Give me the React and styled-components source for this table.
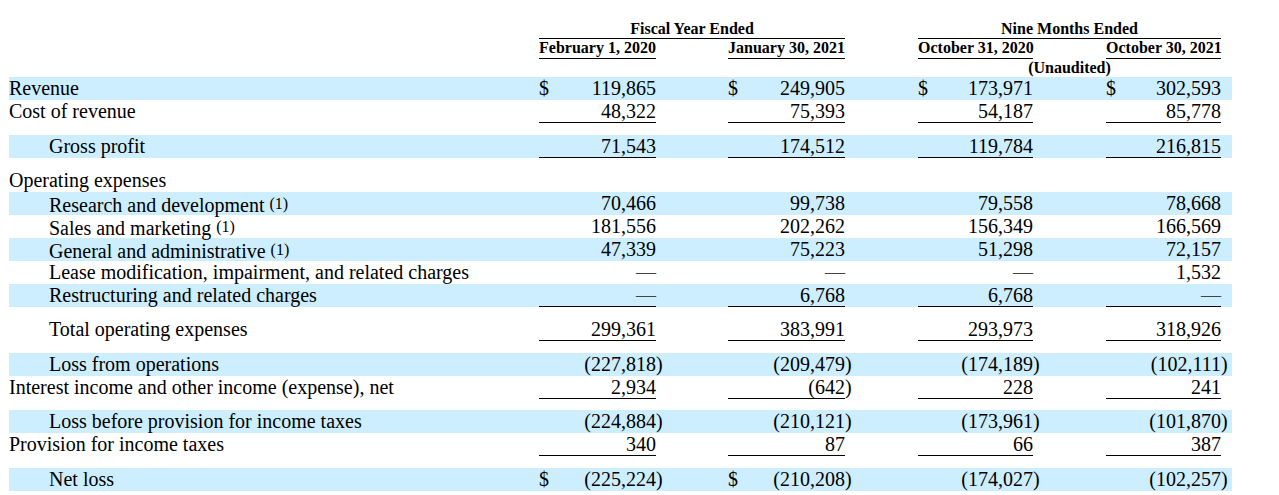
import React from "react";
import styled, { createGlobalStyle } from "styled-components";

const COLS = "530px 117px 72px 117px 73px 115px 73px 115px 11px";

const Global = createGlobalStyle`
  html, body { margin: 0; padding: 0; background: #fff; }
  body { font-family: "Liberation Serif", "Times New Roman", serif; color: #000; }
`;

const Page = styled.div`
  padding: 19px 0 0 9px;
  width: 1223px;
`;

const HeadRow = styled.div`
  display: grid;
  grid-template-columns: ${COLS};
  height: ${(p) => p.$h}px;
  font-size: 16px;
  font-weight: 700;
  line-height: ${(p) => p.$h + 1}px;
`;

const HeadCell = styled.div`
  grid-column: ${(p) => p.$col};
  height: 100%;
  text-align: center;
  white-space: nowrap;
  box-sizing: border-box;
  border-bottom: ${(p) => (p.$rule ? "1px solid #000" : "none")};
`;

const Row = styled.div`
  display: grid;
  grid-template-columns: ${COLS};
  height: 23px;
  font-size: 20px;
  line-height: 23px;
  background: ${(p) => (p.$shaded ? "#cceeff" : "transparent")};
`;

const Spacer = styled.div`
  height: ${(p) => p.$h}px;
`;

const Label = styled.div`
  padding-left: ${(p) => (p.$indent ? 40 : 0)}px;
  white-space: nowrap;
`;

const Note = styled.span`
  font-size: 16px;
  vertical-align: 3px;
  margin-left: 5px;
`;

const ValueCell = styled.div`
  display: flex;
  justify-content: space-between;
  height: 23px;
  box-sizing: border-box;
  white-space: nowrap;
  border-bottom: ${(p) => (p.$rule ? "1px solid #000" : "none")};
`;

const Dash = styled.span`
  color: #444;
`;

const Paren = styled.div`
  white-space: nowrap;
`;

const rows = [
  { label: "Revenue", shaded: true, dollars: [1, 1, 1, 1], v: ["119,865", "249,905", "173,971", "302,593"] },
  { label: "Cost of revenue", rule: true, v: ["48,322", "75,393", "54,187", "85,778"] },
  { spacer: 12 },
  { label: "Gross profit", shaded: true, indent: true, rule: true, v: ["71,543", "174,512", "119,784", "216,815"] },
  { spacer: 11 },
  { label: "Operating expenses", v: null },
  { label: "Research and development", note: true, shaded: true, indent: true, v: ["70,466", "99,738", "79,558", "78,668"] },
  { label: "Sales and marketing", note: true, indent: true, v: ["181,556", "202,262", "156,349", "166,569"] },
  { label: "General and administrative", note: true, shaded: true, indent: true, v: ["47,339", "75,223", "51,298", "72,157"] },
  { label: "Lease modification, impairment, and related charges", indent: true, v: ["—", "—", "—", "1,532"] },
  { label: "Restructuring and related charges", shaded: true, indent: true, rule: true, v: ["—", "6,768", "6,768", "—"] },
  { spacer: 11 },
  { label: "Total operating expenses", indent: true, rule: true, v: ["299,361", "383,991", "293,973", "318,926"] },
  { spacer: 12 },
  { label: "Loss from operations", shaded: true, indent: true, v: ["(227,818)", "(209,479)", "(174,189)", "(102,111)"] },
  { label: "Interest income and other income (expense), net", rule: true, v: ["2,934", "(642)", "228", "241"] },
  { spacer: 11 },
  { label: "Loss before provision for income taxes", shaded: true, indent: true, v: ["(224,884)", "(210,121)", "(173,961)", "(101,870)"] },
  { label: "Provision for income taxes", rule: true, v: ["340", "87", "66", "387"] },
  { spacer: 12 },
  { label: "Net loss", shaded: true, indent: true, dollars: [1, 1, 0, 0], v: ["(225,224)", "(210,208)", "(174,027)", "(102,257)"] },
];

function Value({ value, dollar, rule }) {
  const neg = value.endsWith(")");
  const body = neg ? value.slice(0, -1) : value;
  return (
    <>
      <ValueCell $rule={rule}>
        <span>{dollar ? "$" : ""}</span>
        {body === "—" ? <Dash>—</Dash> : <span>{body}</span>}
      </ValueCell>
      <Paren>{neg ? ")" : ""}</Paren>
    </>
  );
}

export default function App() {
  return (
    <>
      <Global />
      <Page>
        <HeadRow $h={18}>
          <HeadCell $col="2 / 5" $rule>Fiscal Year Ended</HeadCell>
          <HeadCell $col="6 / 9" $rule>Nine Months Ended</HeadCell>
        </HeadRow>
        <HeadRow $h={20}>
          <HeadCell $col="2 / 3" $rule>February 1, 2020</HeadCell>
          <HeadCell $col="4 / 5" $rule>January 30, 2021</HeadCell>
          <HeadCell $col="6 / 7" $rule>October 31, 2020</HeadCell>
          <HeadCell $col="8 / 9" $rule>October 30, 2021</HeadCell>
        </HeadRow>
        <HeadRow $h={20}>
          <HeadCell $col="6 / 9">(Unaudited)</HeadCell>
        </HeadRow>
        {rows.map((r, i) =>
          r.spacer ? (
            <Spacer key={i} $h={r.spacer} />
          ) : (
            <Row key={i} $shaded={r.shaded}>
              <Label $indent={r.indent}>
                {r.label}
                {r.note && <Note>(1)</Note>}
              </Label>
              {r.v &&
                r.v.map((val, j) => (
                  <Value key={j} value={val} dollar={r.dollars && r.dollars[j]} rule={r.rule} />
                ))}
            </Row>
          )
        )}
      </Page>
    </>
  );
}
